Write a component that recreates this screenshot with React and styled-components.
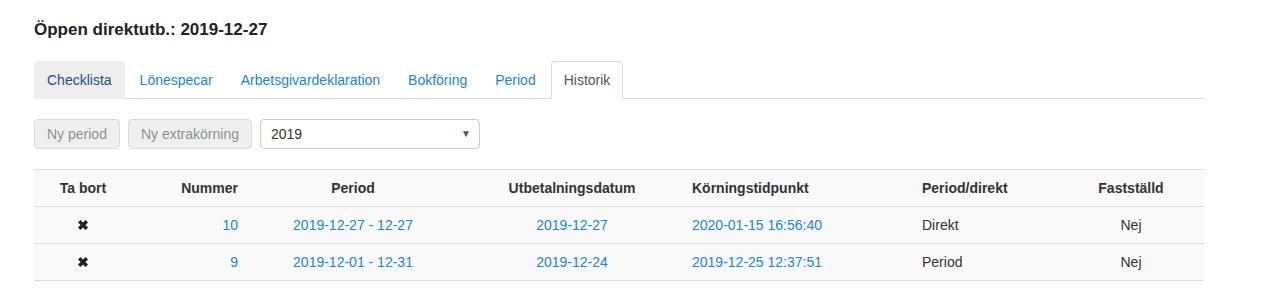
import React from "react";
import styled, { createGlobalStyle } from "styled-components";

const Global = createGlobalStyle`
  body {
    margin: 0;
    background: #fff;
    font-family: "Liberation Sans", Arial, sans-serif;
    font-size: 14px;
    line-height: 20px;
    color: #333;
  }
`;

const Page = styled.div`
  width: 1170px;
  padding: 20px 0 0 34px;
`;

const Title = styled.h4`
  margin: 0 0 21px;
  font-size: 17px;
  font-weight: bold;
  line-height: 20px;
  color: #222;
`;

const Tabs = styled.ul`
  display: flex;
  margin: 0;
  padding: 0;
  list-style: none;
  border-bottom: 1px solid #ddd;
`;

const Tab = styled.li`
  margin: 0 2px -1px 0;
  padding: 8px 12px;
  border: 1px solid ${(p) => (p.$active ? "#ddd" : "transparent")};
  border-bottom-color: transparent;
  border-radius: 4px 4px 0 0;
  background: ${(p) => (p.$active ? "#fff" : p.$hover ? "#eee" : "transparent")};
  color: ${(p) => (p.$active ? "#555" : p.$hover ? "#23527c" : "#2185d0")};
  cursor: pointer;
`;

const Toolbar = styled.div`
  display: flex;
  gap: 8px;
  margin: 20px 0;
`;

const Button = styled.button`
  height: 30px;
  padding: 4px 12px;
  font: inherit;
  color: #8f8f8f;
  background: #efefef;
  border: 1px solid #dcdcdc;
  border-radius: 4px;
`;

const Select = styled.div`
  display: flex;
  align-items: center;
  justify-content: space-between;
  box-sizing: border-box;
  width: 220px;
  height: 30px;
  padding: 0 8px 0 10px;
  border: 1px solid #ccc;
  border-radius: 4px;
  color: #333;
`;

const Arrow = styled.span`
  font-size: 10px;
  color: #555;
`;

const Table = styled.div`
  display: grid;
  grid-template-columns: 98px 114px 214px 224px 230px 144px 146px;
  background: #f9f9f9;
  border-top: 1px solid #ddd;
`;

const Cell = styled.div`
  padding: 8px;
  border-bottom: 1px solid #ddd;
  text-align: ${(p) => p.$align || "center"};
  font-weight: ${(p) => (p.$head ? "bold" : "normal")};
  color: ${(p) => (p.$link ? "#2185d0" : "#333")};
`;

const Remove = styled.svg`
  width: 12px;
  height: 12px;
  vertical-align: -1px;
  fill: #222;
`;

const cols = [
  { title: "Ta bort" },
  { title: "Nummer", align: "right" },
  { title: "Period" },
  { title: "Utbetalningsdatum" },
  { title: "Körningstidpunkt", align: "left" },
  { title: "Period/direkt", align: "left" },
  { title: "Fastställd" },
];

const rows = [
  ["10", "2019-12-27 - 12-27", "2019-12-27", "2020-01-15 16:56:40", "Direkt", "Nej"],
  ["9", "2019-12-01 - 12-31", "2019-12-24", "2019-12-25 12:37:51", "Period", "Nej"],
];

const tabs = ["Checklista", "Lönespecar", "Arbetsgivardeklaration", "Bokföring", "Period", "Historik"];

export default function App() {
  return (
    <Page>
      <Global />
      <Title>Öppen direktutb.: 2019-12-27</Title>
      <Tabs>
        {tabs.map((t, i) => (
          <Tab key={t} $hover={i === 0} $active={t === "Historik"}>
            {t}
          </Tab>
        ))}
      </Tabs>
      <Toolbar>
        <Button disabled>Ny period</Button>
        <Button disabled>Ny extrakörning</Button>
        <Select>
          <span>2019</span>
          <Arrow>▼</Arrow>
        </Select>
      </Toolbar>
      <Table>
        {cols.map((c) => (
          <Cell key={c.title} $head $align={c.align}>
            {c.title}
          </Cell>
        ))}
        {rows.map((r) => (
          <React.Fragment key={r[0]}>
            <Cell>
              <Remove viewBox="0 0 12 12">
                <path d="M1 3.4 3.4 1 6 3.6 8.6 1 11 3.4 8.4 6 11 8.6 8.6 11 6 8.4 3.4 11 1 8.6 3.6 6Z" />
              </Remove>
            </Cell>
            <Cell $link $align="right">{r[0]}</Cell>
            <Cell $link>{r[1]}</Cell>
            <Cell $link>{r[2]}</Cell>
            <Cell $link $align="left">{r[3]}</Cell>
            <Cell $align="left">{r[4]}</Cell>
            <Cell>{r[5]}</Cell>
          </React.Fragment>
        ))}
      </Table>
    </Page>
  );
}
